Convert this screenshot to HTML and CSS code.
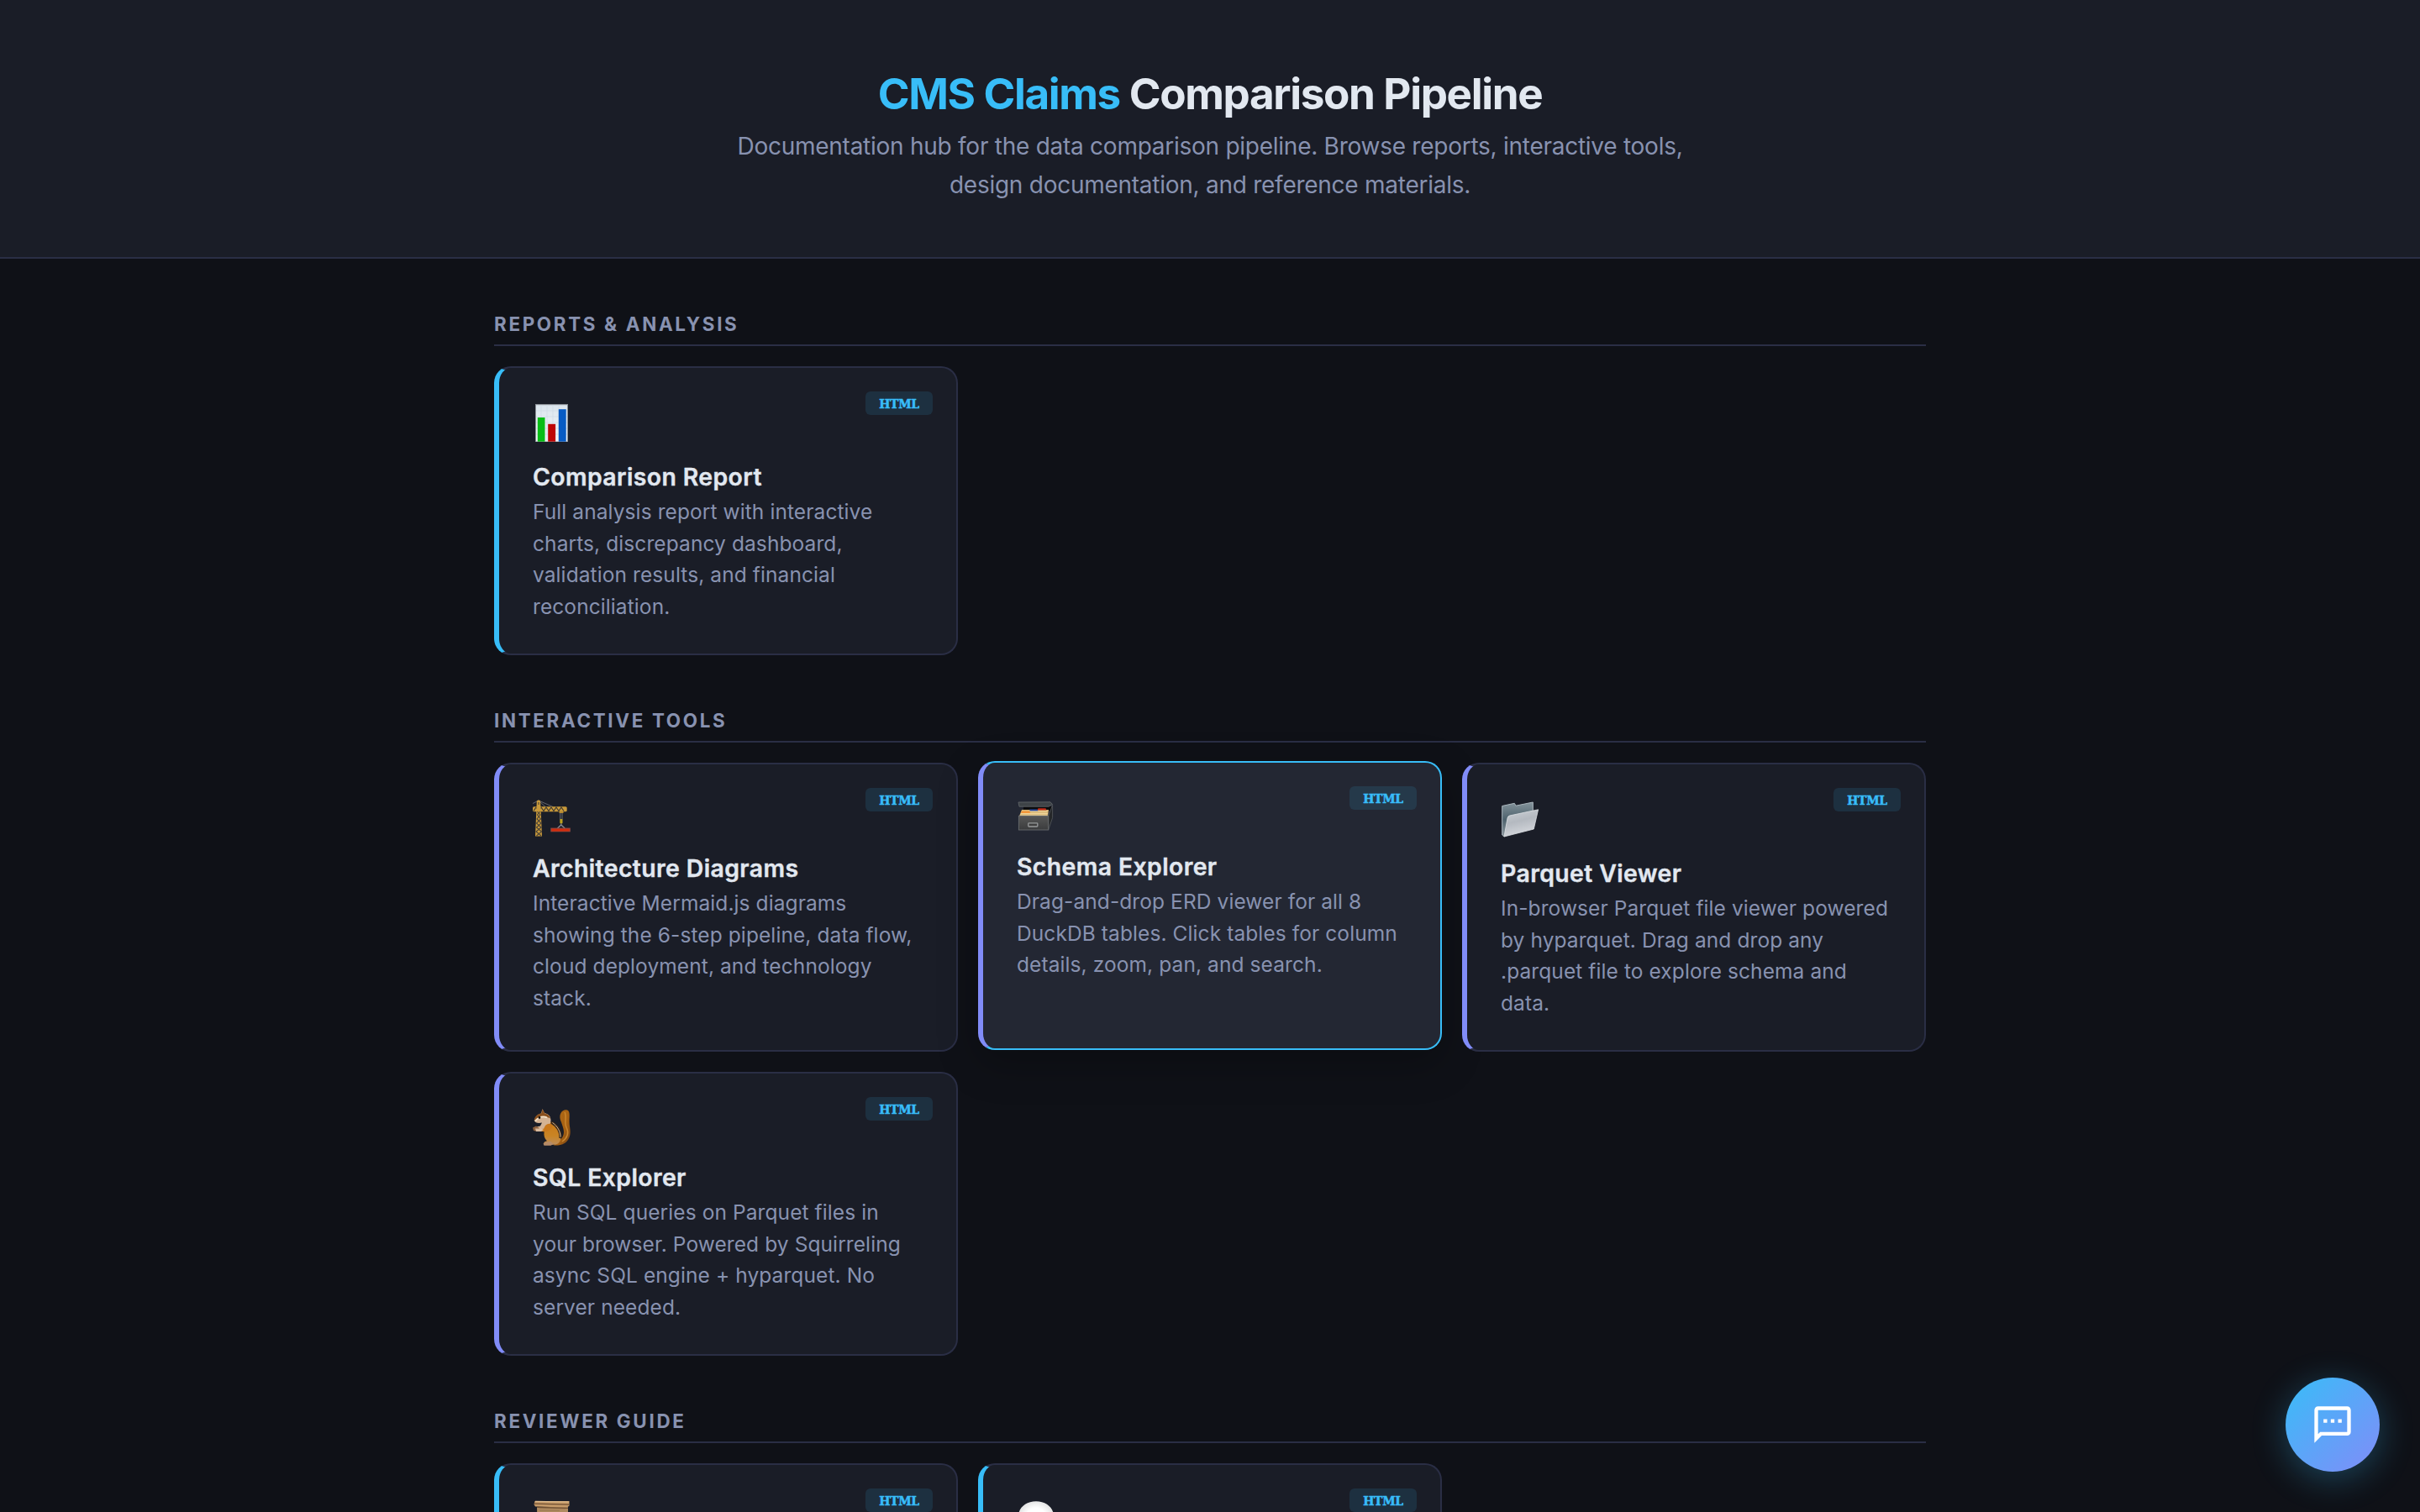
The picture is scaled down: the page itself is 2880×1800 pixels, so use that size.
FILE: index.html
```html
<!DOCTYPE html>
<html lang="en">
<head>
<meta charset="utf-8">
<title>CMS Claims Comparison Pipeline</title>
<link rel="stylesheet" href="styles.css">
</head>
<body>
<header class="hero">
  <h1 class="hero-title"><span class="hero-accent">CMS Claims</span> Comparison Pipeline</h1>
  <p class="hero-sub">Documentation hub for the data comparison pipeline. Browse reports, interactive tools,<br>design documentation, and reference materials.</p>
</header>

<main class="content">
  <section class="section">
    <h2 class="section-title">Reports &amp; Analysis</h2>
    <div class="grid">
      <a class="card card-blue">
        <span class="badge">HTML</span>
        <div class="icon">
          <svg viewBox="0 0 48 50" width="48" height="50">
            <defs><linearGradient id="paper" x1="0" y1="0" x2="0" y2="1"><stop offset="0" stop-color="#dce6ee"/><stop offset="1" stop-color="#f0f4f7"/></linearGradient></defs>
            <rect x="3" y="3" width="39" height="45" fill="#8b9096"/>
            <rect x="4" y="4.2" width="37" height="43.3" fill="url(#paper)"/>
            <path d="M4 11h37M4 18h37M4 25h37M4 32h37M4 39h37M10 4v43M17 4v43M24 4v43M31 4v43" stroke="#cfdbe5" stroke-width=".7"/>
            <rect x="5.8" y="19" width="8.7" height="28.7" fill="#08bd16"/>
            <rect x="18.2" y="26.8" width="8.9" height="20.9" fill="#bd0505"/>
            <rect x="30.8" y="9.2" width="8.9" height="38.5" fill="#075bc4"/>
          </svg>
        </div>
        <h3 class="card-title">Comparison Report</h3>
        <p class="card-desc">Full analysis report with interactive<br>charts, discrepancy dashboard,<br>validation results, and financial<br>reconciliation.</p>
      </a>
    </div>
  </section>

  <section class="section">
    <h2 class="section-title">Interactive Tools</h2>
    <div class="grid">
      <a class="card card-violet">
        <span class="badge">HTML</span>
        <div class="icon icon-short">
          <svg viewBox="0 0 48 50" width="48" height="50">
            <path d="M0 6.5 7 3l17 7.5M7 3l8 7.5" fill="none" stroke="#63656c" stroke-width="1"/>
            <rect x="0" y="10.3" width="40.7" height="5.9" rx="1.5" fill="#c8993a"/>
            <path d="M1 15.5l3-4.5 3 4.5 3-4.5 3 4.5 3-4.5 3 4.5 3-4.5 3 4.5 3-4.5 3 4.5 3-4.5 3 4.5" fill="none" stroke="#3f3a32" stroke-width="1.2"/>
            <path d="M4.8 3.5Q7 1.500 9 3.500L9.500 11 11 45.500H3L4.500 11Z" fill="#c8993a"/>
            <path d="M7 5v3M5.500 16l3.500 4-4 5 5 5-5.500 5 6 5-6 5M9 16l-3.500 4 4 5-5 5 5.500 5-6 5 6 5" fill="none" stroke="#4a4338" stroke-width="1.100"/>
            <path d="M32.700 16v10M35 16v10" stroke="#7b7d84" stroke-width=".8"/>
            <rect x="31.500" y="16" width="5" height="2" fill="#b48831"/>
            <rect x="32.300" y="25" width="3.200" height="5.500" rx="1" fill="#bca21e"/>
            <path d="M33.800 30.500v2M29.500 36l4.300-4 4.300 4" fill="none" stroke="#888b91" stroke-width="1.300"/>
            <rect x="21.300" y="35.600" width="23.500" height="4.700" fill="#8d4a44"/>
            <rect x="22.300" y="36.600" width="21.500" height="3" fill="#d02c0d"/>
          </svg>
        </div>
        <h3 class="card-title">Architecture Diagrams</h3>
        <p class="card-desc">Interactive Mermaid.js diagrams<br>showing the 6-step pipeline, data flow,<br>cloud deployment, and technology<br>stack.</p>
      </a>
      <a class="card card-violet card-active">
        <span class="badge">HTML</span>
        <div class="icon icon-short">
          <svg viewBox="0 0 48 50" width="48" height="50">
            <defs><linearGradient id="box" x1="0" y1="0" x2="0" y2="1"><stop offset="0" stop-color="#575757"/><stop offset="1" stop-color="#3b3c3d"/></linearGradient></defs>
            <path d="M8 11h31l3 2v4H8Z" fill="#0c0c0d"/>
            <path d="M2 7 40 6.800 42.500 9.500 38 12.200H3Z" fill="#3e4347" stroke="#62676b" stroke-width=".8"/>
            <path d="M37.700 23.200 42.600 10.500V25.500L37.700 39.800Z" fill="#252729" stroke="#5b6064" stroke-width=".7"/>
            <path d="M6 16h32l-1 7.500H3Z" fill="#d8b878"/>
            <path d="M25.500 14.200h9l1 2.300H24.500Z" fill="#c02a18"/>
            <path d="M15.500 15.600h9l1 2.200h-10Z" fill="#2a4ca6"/>
            <path d="M6 17.600h9.500l1 2.600H5Z" fill="#f3953a"/>
            <path d="M15.500 18h21M5 20.500h32M4 22.300h32" stroke="#f0d59b" stroke-width="1"/>
            <rect x="2.400" y="23.300" width="35.300" height="16.700" fill="url(#box)" stroke="#686b6e" stroke-width=".9"/>
            <rect x="13.800" y="31.800" width="11" height="4.200" rx=".8" fill="#404040" stroke="#989a9b" stroke-width="1.300"/>
          </svg>
        </div>
        <h3 class="card-title">Schema Explorer</h3>
        <p class="card-desc">Drag-and-drop ERD viewer for all 8<br>DuckDB tables. Click tables for column<br>details, zoom, pan, and search.</p>
      </a>
      <a class="card card-violet">
        <span class="badge">HTML</span>
        <div class="icon">
          <svg viewBox="0 0 48 50" width="48" height="50">
            <defs>
              <linearGradient id="back" x1="0" y1="0" x2="0" y2="1"><stop offset="0" stop-color="#84939b"/><stop offset=".5" stop-color="#4e626d"/><stop offset="1" stop-color="#8d989e"/></linearGradient>
              <linearGradient id="front" x1="0" y1="0" x2=".3" y2="1"><stop offset="0" stop-color="#cdd1d6"/><stop offset=".5" stop-color="#b4b9c0"/><stop offset="1" stop-color="#d3d6db"/></linearGradient>
            </defs>
            <path d="M1.700 9.500 16.300 6.300 18 9.200 38.300 5V18L4 46 1.700 44Z" fill="url(#back)" stroke="#aab6bd" stroke-width="1" stroke-linejoin="round"/>
            <path d="M10.500 21 44.600 13.800 39.300 37 4 46 8 24Q8.500 21.500 10.500 21Z" fill="url(#front)" stroke="#dde1e5" stroke-width=".8" stroke-linejoin="round"/>
          </svg>
        </div>
        <h3 class="card-title">Parquet Viewer</h3>
        <p class="card-desc">In-browser Parquet file viewer powered<br>by hyparquet. Drag and drop any<br>.parquet file to explore schema and<br>data.</p>
      </a>
      <a class="card card-violet">
        <span class="badge">HTML</span>
        <div class="icon icon-short">
          <svg viewBox="0 0 48 50" width="48" height="50">
            <defs>
              <linearGradient id="tail" x1="0" y1="0" x2="1" y2="1"><stop offset="0" stop-color="#ad6816"/><stop offset=".6" stop-color="#a96212"/><stop offset="1" stop-color="#704016"/></linearGradient>
              <linearGradient id="fur" x1="0" y1="0" x2="0" y2="1"><stop offset="0" stop-color="#c97a18"/><stop offset=".6" stop-color="#c98424"/><stop offset="1" stop-color="#bd8d59"/></linearGradient>
            </defs>
            <path d="M34 18C30 10 34 3 40 3.300 45 4 43.500 11 43.500 17 43.500 25 47 31 42 39 38 45 31 46 25 45.500L29 41C36 38 38 32 36.500 26 35.500 22 35 21 34 18Z" fill="url(#tail)"/>
            <path d="M38 6c3 6-1 12 2 18s2 12-5 17" fill="none" stroke="#c9852e" stroke-width="1.500"/>
            <path d="M20 18c6 0 13 8 13.500 17 0 6-3 9.500-8 9.800H14c-2-2 0-4 3-4.500C11 35 13 24 20 18Z" fill="url(#fur)"/>
            <path d="M22 18c7 4 11.500 11 11 19" fill="none" stroke="#3d2818" stroke-width="3.200"/>
            <path d="M23.500 18.500c6 4 9.700 11 9.500 17" fill="none" stroke="#d9bd97" stroke-width="1"/>
            <path d="M1.700 16C3 11 6 8.500 10 7.500L11.500 2.200 14 7c5 1 7.500 4 7.500 9 0 5-4 9-9 11L4 27.500 2 24l7-1.500 2-4C6 19.500 3 18.500 1.700 16Z" fill="#d4b394"/>
            <path d="M2 13.500C4 9.500 7 8 10.300 7.300L11.700 2.300 14 7.200C18 8 20.500 10.500 21 13.500 14 9.500 8 10 2 16Z" fill="#89501e"/>
            <path d="M3 16.500C8 11 13 10.500 17 12.500" fill="none" stroke="#f5e4ca" stroke-width="1.700"/>
            <circle cx="8" cy="12.500" r="1.400" fill="#17100b"/>
            <path d="M15 22c3-3 7-3 8 0s-3 7-10 7.200L7 28.500l1-2.300 5-.5Z" fill="#c9781b"/>
            <path d="M0 24.500 4 22.500 8 25 5 29 1 28Z" fill="#8d613f"/>
            <path d="M3 25.500h7l3 1.500-3 2H4Z" fill="#d9bb9f"/>
            <path d="M12.500 43.500q4-3 9-2.500l3 3-3 1.700h-8Z" fill="#b58b68"/>
          </svg>
        </div>
        <h3 class="card-title">SQL Explorer</h3>
        <p class="card-desc">Run SQL queries on Parquet files in<br>your browser. Powered by Squirreling<br>async SQL engine + hyparquet. No<br>server needed.</p>
      </a>
    </div>
  </section>

  <section class="section">
    <h2 class="section-title">Reviewer Guide</h2>
    <div class="grid">
      <a class="card card-blue card-tall">
        <span class="badge">HTML</span>
        <div class="icon">
          <svg viewBox="0 0 48 50" width="48" height="50">
            <path d="M5 10H42V48H6Z" fill="#b08b60"/>
            <path d="M8 12h31M8 14.500h24" stroke="#9c7a52" stroke-width="1"/>
            <path d="M2.500 3H43.500V8.500L41 10.500 3 9.500 1.500 7Z" fill="#c59a68"/>
            <path d="M2 6.200 43 7.200M5 10.400 42 11.400" stroke="#6e4e31" stroke-width="1.200"/>
            <path d="M3 3.300 43 4" stroke="#e0bd8e" stroke-width="1.200"/>
          </svg>
        </div>
      </a>
      <a class="card card-blue card-tall">
        <span class="badge">HTML</span>
        <div class="icon">
          <svg viewBox="0 0 48 50" width="48" height="50">
            <defs><radialGradient id="bubble"><stop offset=".6" stop-color="#fff"/><stop offset="1" stop-color="#e6e6e6"/></radialGradient></defs>
            <path d="M23 3.300C35 3.300 44 11 44 21S35 38.500 23 38.500L10 44 12 36C6 33 2 27 2 21 2 11 11 3.300 23 3.300Z" fill="url(#bubble)"/>
          </svg>
        </div>
      </a>
    </div>
  </section>
</main>

<button class="chat" aria-label="Open chat">
  <svg viewBox="0 0 24 24" width="52" height="52" fill="#fff"><path d="M4 4h16v12H5.170L4 17.170V4m0-2c-1.100 0-1.990.9-1.990 2L2 22l4-4h14c1.100 0 2-.9 2-2V4c0-1.100-.9-2-2-2H4zm3 7h2v2H7V9zm4 0h2v2h-2V9zm4 0h2v2h-2V9z"/></svg>
</button>
</body>
</html>
```
FILE: styles.css
```css
* { box-sizing: border-box; margin: 0; padding: 0; }

:root {
  --bg: #0f1117;
  --surface: #1a1d27;
  --surface-hover: #232733;
  --border: #2a2e45;
  --text: #e2e8f0;
  --muted: #8892b0;
  --blue: #38bdf8;
  --violet: #818cf8;
}

body {
  height: 100vh;
  overflow: hidden;
  background: var(--bg);
  color: var(--text);
  font-family: Inter, "Liberation Sans", sans-serif;
}

.hero {
  padding: 80px 0 63px;
  background: var(--surface);
  border-bottom: 2px solid var(--border);
  text-align: center;
}
.hero-title {
  font-size: 51.2px;
  font-weight: 700;
  line-height: 63px;
  letter-spacing: -1.36px;
}
.hero-accent { color: var(--blue); }
.hero-sub {
  margin-top: 8px;
  font-size: 28px;
  line-height: 46px;
  letter-spacing: -0.26px;
  color: var(--muted);
}

.content {
  width: 1704px;
  margin: 0 auto;
  padding-top: 60px;
}
.section { margin-bottom: 60px; }
.section-title {
  margin-bottom: 24px;
  padding-bottom: 6px;
  border-bottom: 2px solid var(--border);
  font-size: 22.4px;
  font-weight: 700;
  line-height: 36px;
  letter-spacing: 2.68px;
  text-transform: uppercase;
  color: var(--muted);
}

.grid {
  display: grid;
  grid-template-columns: repeat(3, 1fr);
  gap: 24px;
}
.card {
  position: relative;
  padding: 40px 40px 37px;
  background: var(--surface);
  border: 2px solid var(--border);
  border-left-width: 6px;
  border-radius: 20px;
}
.card-blue { border-left-color: var(--blue); }
.card-violet { border-left-color: var(--violet); }
.card-tall { min-height: 338px; }
.card-active {
  background: var(--surface-hover);
  border-top-color: var(--blue);
  border-right-color: var(--blue);
  border-bottom-color: var(--blue);
  box-shadow: 0 16px 48px rgba(0, 0, 0, 0.25);
  transform: translateY(-2px);
}

.badge {
  position: absolute;
  top: 28px;
  right: 28px;
  width: 80px;
  height: 28px;
  border-radius: 6px;
  background: rgba(56, 189, 248, 0.12);
  color: var(--blue);
  font-family: "DejaVu Serif Condensed", "DejaVu Serif", serif;
  font-size: 15.5px;
  font-weight: 700;
  line-height: 29px;
  letter-spacing: -0.35px;
  text-align: center;
  -webkit-text-stroke: 0.5px var(--blue);
}

.icon { height: 72px; }
.icon-short { height: 66px; }
.icon svg { display: block; }

.card-title {
  margin-bottom: 5px;
  font-size: 28.4px;
  font-weight: 600;
  line-height: 36px;
  letter-spacing: 0.39px;
  -webkit-text-stroke: 0.4px var(--text);
}
.card-desc {
  font-size: 24.5px;
  line-height: 37.5px;
  letter-spacing: 0.09px;
  white-space: nowrap;
  color: var(--muted);
}

.chat {
  position: fixed;
  right: 48px;
  bottom: 48px;
  display: flex;
  align-items: center;
  justify-content: center;
  width: 112px;
  height: 112px;
  border: 0;
  border-radius: 50%;
  background: linear-gradient(135deg, var(--blue), var(--violet));
  box-shadow: 0 8px 40px rgba(56, 189, 248, 0.3);
}
```
